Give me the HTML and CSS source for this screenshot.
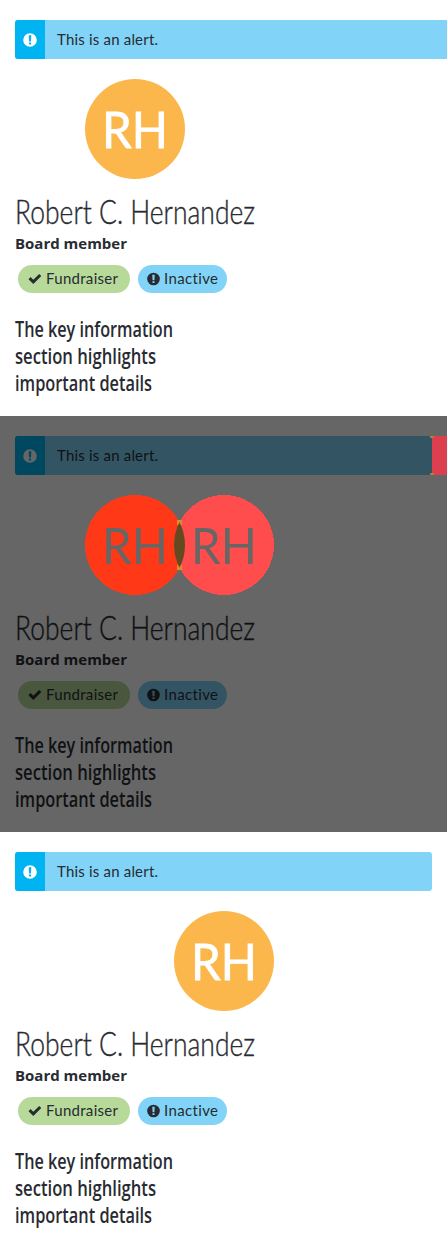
FILE: index.html
```html
<!DOCTYPE html>
<html lang="en">
<head>
<meta charset="utf-8">
<title>Profile summary</title>
<link rel="stylesheet" href="styles.css">
</head>
<body>
<svg class="defs" aria-hidden="true">
  <symbol id="info" viewBox="0 0 14 14"><path fill-rule="evenodd" d="M7 .2a6.8 6.8 0 1 1 0 13.6A6.8 6.8 0 0 1 7 .2ZM5.7 2.3 6 8.4h2l.3-6.1ZM5.9 9.4v2h2.2v-2Z"/></symbol>
  <symbol id="check" viewBox="0 0 14 12"><path d="M.5 6.2 2.6 4.1 5.3 6.7 11.2.9l2.1 2.1-8 8Z"/></symbol>
</svg>
<main id="panels">
  <section class="panel wide">
    <div class="alert"><div class="alert-icon"><svg><use href="#info"/></svg></div><svg class="alert-text"><text x="12" y="25" textLength="101">This is an alert.</text></svg></div>
    <svg class="avatar"><circle cx="120" cy="50" r="50" fill="#fbb74c"/><text x="87" y="69" textLength="66" lengthAdjust="spacingAndGlyphs">RH</text></svg>
    <svg class="heading"><text class="name" x="0" y="45" textLength="240" lengthAdjust="spacingAndGlyphs">Robert C. Hernandez</text><text class="role" x="0" y="70" textLength="112" lengthAdjust="spacingAndGlyphs">Board member</text></svg>
    <div class="labels"><div class="label green"><svg class="icon"><use href="#check"/></svg><svg class="label-text"><text x="0" y="19" textLength="72">Fundraiser</text></svg></div><div class="label blue"><svg class="icon"><use href="#info"/></svg><svg class="label-text"><text x="0" y="19" textLength="54">Inactive</text></svg></div></div>
    <svg class="details"><text x="0" y="44" textLength="158" lengthAdjust="spacingAndGlyphs">The key information</text><text x="0" y="71" textLength="141" lengthAdjust="spacingAndGlyphs">section highlights</text><text x="0" y="98" textLength="137" lengthAdjust="spacingAndGlyphs">important details</text></svg>
  </section>
  <section class="panel dim">
    <div class="alert"><div class="alert-icon"><svg><use href="#info"/></svg></div><svg class="alert-text"><text x="12" y="25" textLength="101">This is an alert.</text></svg></div>
    <svg class="avatar thin"><circle cx="120" cy="50" r="50" fill="#ff3917" shape-rendering="crispEdges"/><circle cx="209" cy="50" r="50" fill="#ff4d4d" shape-rendering="crispEdges"/><path d="M162 25h5v5h-5zM162 70h5v5h-5z" fill="#d8902d"/><path d="M164.5 27.2A50 50 0 0 1 164.5 72.8A50 50 0 0 1 164.5 27.2Z" fill="#644a1e"/><text x="87" y="69" textLength="66" lengthAdjust="spacingAndGlyphs">RH</text><text x="176" y="69" textLength="66" lengthAdjust="spacingAndGlyphs">RH</text></svg>
    <svg class="heading"><text class="name" x="0" y="45" textLength="240" lengthAdjust="spacingAndGlyphs">Robert C. Hernandez</text><text class="role" x="0" y="70" textLength="112" lengthAdjust="spacingAndGlyphs">Board member</text></svg>
    <div class="labels"><div class="label green"><svg class="icon"><use href="#check"/></svg><svg class="label-text"><text x="0" y="19" textLength="72">Fundraiser</text></svg></div><div class="label blue"><svg class="icon"><use href="#info"/></svg><svg class="label-text"><text x="0" y="19" textLength="54">Inactive</text></svg></div></div>
    <svg class="details"><text x="0" y="44" textLength="158" lengthAdjust="spacingAndGlyphs">The key information</text><text x="0" y="71" textLength="141" lengthAdjust="spacingAndGlyphs">section highlights</text><text x="0" y="98" textLength="137" lengthAdjust="spacingAndGlyphs">important details</text></svg>
    <div class="overflow-mark"></div>
  </section>
  <section class="panel">
    <div class="alert"><div class="alert-icon"><svg><use href="#info"/></svg></div><svg class="alert-text"><text x="12" y="25" textLength="101">This is an alert.</text></svg></div>
    <svg class="avatar"><circle cx="209" cy="50" r="50" fill="#fbb74c"/><text x="176" y="69" textLength="66" lengthAdjust="spacingAndGlyphs">RH</text></svg>
    <svg class="heading"><text class="name" x="0" y="45" textLength="240" lengthAdjust="spacingAndGlyphs">Robert C. Hernandez</text><text class="role" x="0" y="70" textLength="112" lengthAdjust="spacingAndGlyphs">Board member</text></svg>
    <div class="labels"><div class="label green"><svg class="icon"><use href="#check"/></svg><svg class="label-text"><text x="0" y="19" textLength="72">Fundraiser</text></svg></div><div class="label blue"><svg class="icon"><use href="#info"/></svg><svg class="label-text"><text x="0" y="19" textLength="54">Inactive</text></svg></div></div>
    <svg class="details"><text x="0" y="44" textLength="158" lengthAdjust="spacingAndGlyphs">The key information</text><text x="0" y="71" textLength="141" lengthAdjust="spacingAndGlyphs">section highlights</text><text x="0" y="98" textLength="137" lengthAdjust="spacingAndGlyphs">important details</text></svg>
  </section>
</main>
</body>
</html>
```
FILE: styles.css
```css
* { box-sizing: border-box; }
body { margin: 0; background: #fff; color: #282b31; font-family: Lato, "Open Sans", sans-serif; font-size: 15px; font-variant-ligatures: none; }
svg { display: block; fill: currentColor; flex: none; overflow: visible; }
.defs { width: 0; height: 0; position: absolute; }
.panel { height: 416px; padding: 20px 15px 0; position: relative; --solid: #00b4f1; --blue: #81d4f7; --green: #b7da9b; --mark: #fff; }
.wide { padding-right: 0; }
.dim { background: #666; color: #101114; --solid: #004860; --blue: #335563; --green: #49573e; --mark: #666; }
.alert { height: 39px; display: flex; background: var(--blue); border-radius: 3px; }
.wide .alert { border-radius: 3px 0 0 3px; }
.alert-icon { width: 30px; display: flex; align-items: center; justify-content: center; background: var(--solid); color: var(--mark); border-radius: 3px 0 0 3px; }
.alert-icon svg { width: 14px; height: 14px; }
.alert-text { width: 150px; height: 39px; }
.avatar { width: 260px; height: 100px; margin-top: 20px; font-size: 50px; }
.avatar text { fill: var(--mark); stroke: var(--mark); stroke-width: 0.8px; }
.avatar.thin text { stroke: none; }
.heading { width: 300px; height: 86px; }
.name { font-size: 33.5px; font-weight: 300; stroke: currentColor; stroke-width: 0.4px; }
.role { font-size: 15px; font-weight: 700; font-family: "Open Sans", "Noto Sans", sans-serif; }
.labels { display: flex; gap: 8px; padding-left: 3px; }
.label { height: 28px; padding-left: 9px; border-radius: 14px; display: flex; align-items: center; gap: 4px; }
.green { width: 112px; background: var(--green); }
.blue { width: 89px; background: var(--blue); }
.icon { width: 14px; height: 14px; }
.blue .icon { width: 13px; }
.green .icon { margin-left: 1px; }
.label-text { width: 54px; height: 28px; }
.green .label-text { width: 72px; }
.details { width: 200px; height: 110px; font-size: 21.5px; font-weight: 600; font-family: "Open Sans", "Noto Sans", sans-serif; }
.overflow-mark { position: absolute; left: 432px; top: 20px; width: 15px; height: 39px; background: #dc404e; }
.overflow-mark::before, .overflow-mark::after { content: ""; position: absolute; left: -2px; width: 4px; height: 2px; background: #b47b3d; }
.overflow-mark::before { top: 0; }
.overflow-mark::after { bottom: 0; }
```
